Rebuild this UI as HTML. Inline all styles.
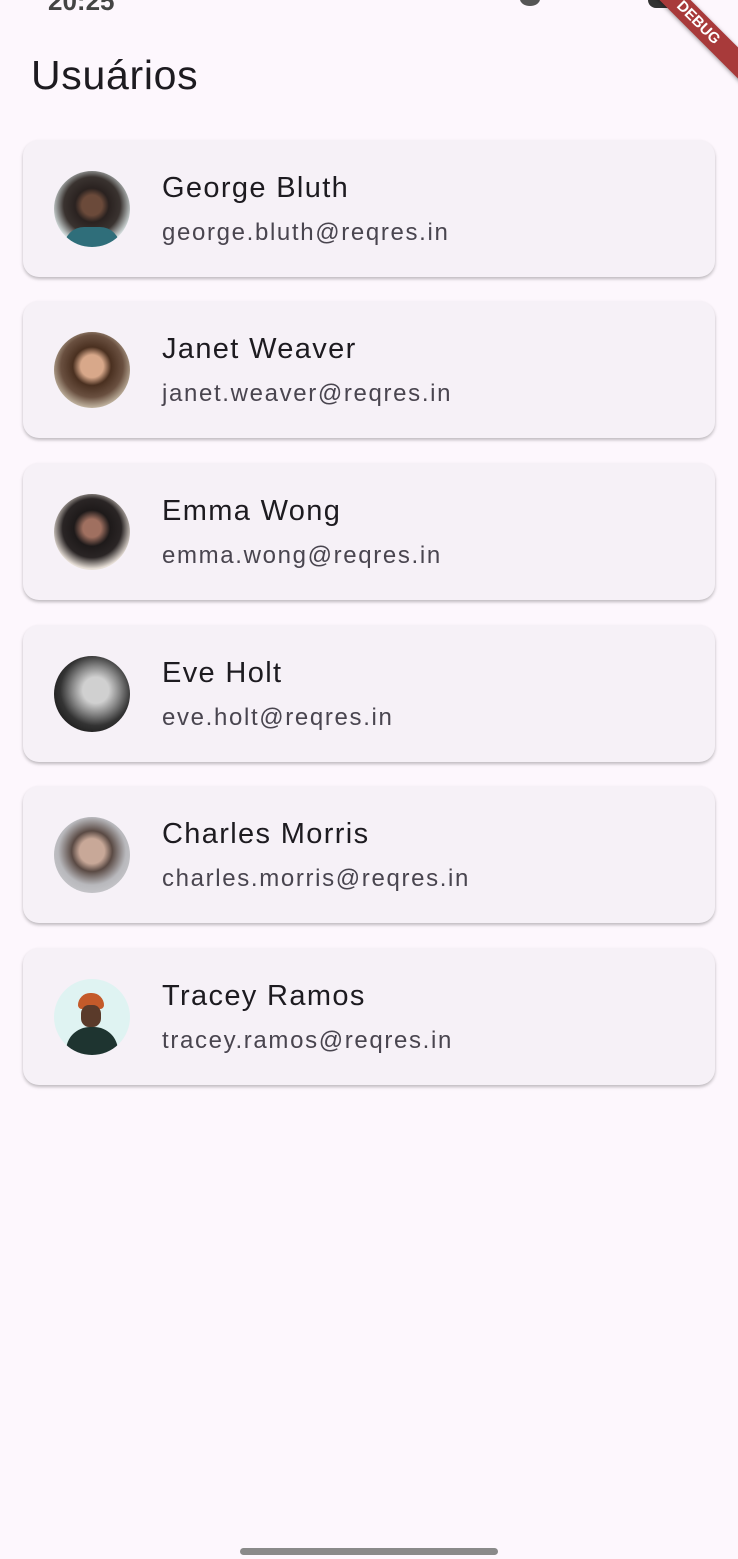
<!DOCTYPE html>
<html><head><meta charset="utf-8"><style>
body{margin:0;width:738px;height:1559px;background:#fdf7fd;font-family:"Liberation Sans",sans-serif;position:relative;overflow:hidden}
.title{position:absolute;left:31px;top:52px;font-size:41px;color:#1d1b20;letter-spacing:0.7px}
.card{position:absolute;left:23px;width:692px;height:137px;background:#f6f1f7;border-radius:16px;box-shadow:0 2px 3px rgba(0,0,0,.25)}
.av{position:absolute;left:31px;top:31px;width:76px;height:76px;border-radius:50%;overflow:hidden}
.n{position:absolute;left:139px;top:32px;font-size:29px;color:#1d1b20;letter-spacing:1.35px}
.e{position:absolute;left:139px;top:79px;font-size:24px;color:#49454f;letter-spacing:1.65px}
.bar{position:absolute;left:240px;top:1548px;width:258px;height:7px;border-radius:4px;background:#8a8a8a}
.status{position:absolute;top:-14px;left:48px;font-size:26px;font-weight:bold;color:#444}
.ribbon{position:absolute;right:-40px;top:12px;width:160px;height:22px;background:#a83a3a;transform:rotate(45deg);color:#fff;font-size:15px;font-weight:bold;text-align:center;line-height:22px;box-shadow:0 1px 4px rgba(0,0,0,.4)}
</style></head><body>
<div class="status">20:25</div>
<div style="position:absolute;left:520px;top:-8px;width:20px;height:14px;border-radius:50%;background:#555"></div>
<div style="position:absolute;left:648px;top:-10px;width:40px;height:18px;border-radius:8px;background:#333"></div>
<div class="ribbon">DEBUG</div>
<div class="title">Usuários</div>

<div class="card" style="top:140px"><div class="av" style="background:radial-gradient(circle at 50% 45%,#6b4a3a 0 18%,#2a2220 30%,#3a3330 50%,#d8e2e2 72%);"><div style="position:absolute;bottom:0;left:10px;width:56px;height:20px;background:#2f6e7a;border-radius:20px 20px 0 0"></div></div><div class="n">George Bluth</div><div class="e">george.bluth@reqres.in</div></div>
<div class="card" style="top:301px"><div class="av" style="background:radial-gradient(circle at 50% 45%,#d8a88a 0 20%,#4a3020 34%,#6a5040 55%,#c8bca8 75%);"></div><div class="n">Janet Weaver</div><div class="e">janet.weaver@reqres.in</div></div>
<div class="card" style="top:463px"><div class="av" style="background:radial-gradient(circle at 50% 45%,#a07060 0 16%,#1e1a1a 32%,#2a2525 52%,#e8e0d8 72%);"></div><div class="n">Emma Wong</div><div class="e">emma.wong@reqres.in</div></div>
<div class="card" style="top:625px"><div class="av" style="background:radial-gradient(circle at 55% 45%,#d0d0d0 0 22%,#888 40%,#333 60%,#1a1a1a 80%);"></div><div class="n">Eve Holt</div><div class="e">eve.holt@reqres.in</div></div>
<div class="card" style="top:786px"><div class="av" style="background:radial-gradient(circle at 50% 45%,#c8a898 0 22%,#5a4a44 36%,#b8b8bc 60%,#c8c8cc 80%);"></div><div class="n">Charles Morris</div><div class="e">charles.morris@reqres.in</div></div>
<div class="card" style="top:948px"><div class="av" style="background:#dff3f2"><div style="position:absolute;left:24px;top:14px;width:26px;height:16px;border-radius:13px 13px 4px 4px;background:#c45a2a"></div><div style="position:absolute;left:27px;top:26px;width:20px;height:22px;border-radius:40%;background:#5a3a2a"></div><div style="position:absolute;left:12px;top:48px;width:52px;height:30px;border-radius:24px 24px 0 0;background:#1e3430"></div></div><div class="n">Tracey Ramos</div><div class="e">tracey.ramos@reqres.in</div></div>

<div class="bar"></div>
</body></html>
